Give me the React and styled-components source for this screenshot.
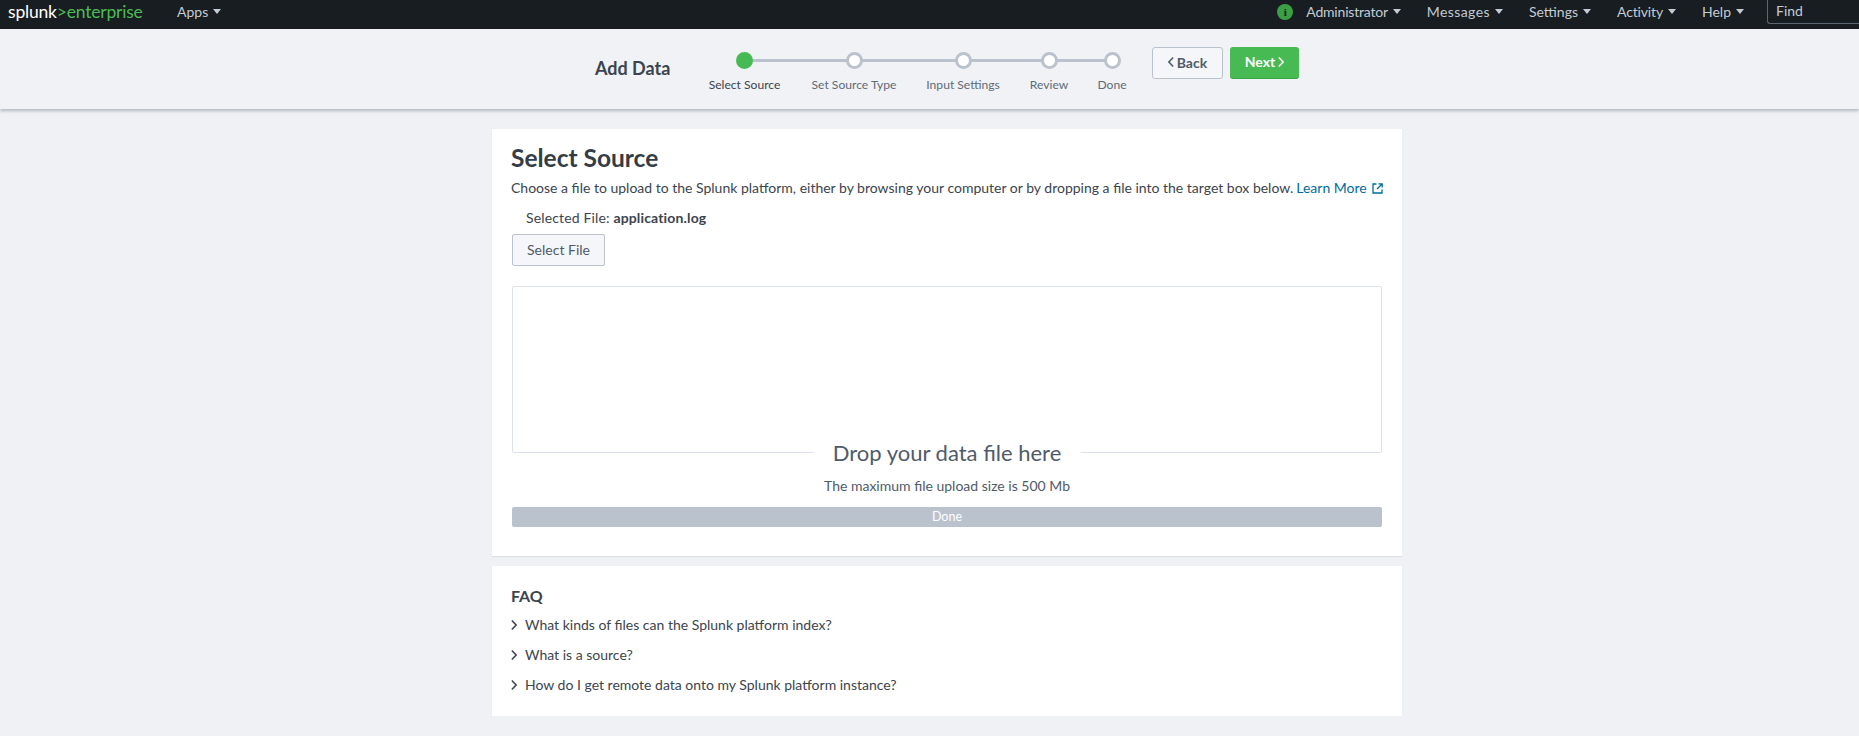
import React from 'react';
import styled, { createGlobalStyle } from 'styled-components';

const Global = createGlobalStyle`
  html, body { margin: 0; padding: 0; }
  body {
    background: #eff1f4;
    font-family: Lato, "Open Sans", sans-serif;
    color: #3c444d;
    font-size: 14px;
  }
`;

const Nav = styled.div`
  height: 29px;
  box-sizing: border-box;
  padding-bottom: 6px;
  background: #171d21;
  display: flex;
  align-items: center;
  overflow: hidden;
`;
const Logo = styled.div`
  margin-left: 8px;
  width: 135px;
  font-size: 17.5px;
  font-weight: 400;
  letter-spacing: -0.2px;
  color: #ffffff;
  white-space: nowrap;
  span { color: #4dbb55; }
`;
const NavItem = styled.div`
  display: flex;
  align-items: center;
  gap: 5px;
  color: #c3cbd4;
  font-size: 14px;
  letter-spacing: ${p => p.$ls || 0}px;
  white-space: nowrap;
`;
const Caret = styled.i`
  width: 0;
  height: 0;
  border-left: 4px solid transparent;
  border-right: 4px solid transparent;
  border-top: 5px solid #c3cbd4;
`;
const AppsMenu = styled.div`
  margin-left: 34px;
`;
const NavRight = styled.div`
  margin-left: auto;
  display: flex;
  align-items: center;
  gap: 26px;
`;
const InfoDot = styled.div`
  width: 16px;
  height: 16px;
  margin-right: -13px;
  border-radius: 50%;
  background: #3c9e45;
  color: #171d21;
  font: bold 11px/16px "Liberation Serif", serif;
  text-align: center;
`;
const FindBox = styled.div`
  align-self: flex-start;
  width: 92px;
  height: 25px;
  margin-left: -3px;
  box-sizing: border-box;
  border-left: 1px solid #5c6773;
  border-bottom: 1px solid #5c6773;
  border-bottom-left-radius: 3px;
  padding-left: 8px;
  color: #c3cbd4;
  font-size: 14px;
  line-height: 23px;
`;

const SubHeader = styled.div`
  height: 80px;
  box-sizing: border-box;
  background: #f0f2f5;
  box-shadow: 0 2px 3px rgba(60, 80, 110, 0.35);
  display: flex;
  padding-left: 595px;
`;
const PageTitle = styled.div`
  width: 113px;
  margin-top: 28px;
  font-size: 18px;
  font-weight: 700;
  line-height: 22px;
  color: #3c444d;
`;
const Steps = styled.div`
  display: flex;
  gap: 30px;
  padding-top: 23px;
`;
const Step = styled.div`
  position: relative;
  width: ${p => p.$w}px;
  display: flex;
  flex-direction: column;
  align-items: center;
  &::after {
    content: '';
    display: ${p => (p.$line ? 'block' : 'none')};
    position: absolute;
    top: 7px;
    left: 50%;
    width: ${p => p.$line}px;
    height: 3px;
    background: #bac2ce;
  }
`;
const Dot = styled.div`
  position: relative;
  z-index: 1;
  width: 17px;
  height: 17px;
  box-sizing: border-box;
  border-radius: 50%;
  border: 3px solid ${p => (p.$active ? '#47ba53' : '#bac2ce')};
  background: ${p => (p.$active ? '#47ba53' : '#ffffff')};
`;
const StepLabel = styled.div`
  margin-top: 8px;
  font-size: 12.1px;
  line-height: 15px;
  white-space: nowrap;
  color: ${p => (p.$active ? '#3c444d' : '#5f6b78')};
`;
const Actions = styled.div`
  display: flex;
  gap: 7px;
  margin-left: 27px;
  padding-top: 18px;
  align-items: flex-start;
`;
const NavButton = styled.button`
  height: 32px;
  box-sizing: border-box;
  border-radius: 3px;
  font-family: inherit;
  font-size: 14px;
  font-weight: 700;
  display: flex;
  align-items: center;
  justify-content: center;
  gap: 3px;
  padding: 0 0 2px;
  width: ${p => p.$w}px;
  color: ${p => (p.$primary ? '#ffffff' : '#4f5b69')};
  background: ${p => (p.$primary ? '#47ba53' : '#f4f6f9')};
  border: ${p => (p.$primary ? 'none' : '1px solid #bac2ce')};
  border-bottom: ${p => (p.$primary ? '1px solid #3da547' : '1px solid #bac2ce')};
`;

const Main = styled.div`
  width: 910px;
  margin: 20px 0 0 492px;
  display: flex;
  flex-direction: column;
  gap: 10px;
`;
const Card = styled.div`
  background: #ffffff;
  box-shadow: 0 1px 1px #dde1e8;
  padding: 0 20px 0 19px;
  height: ${p => p.$h}px;
  box-sizing: border-box;
`;
const Title = styled.h2`
  margin: 0;
  padding-top: 15px;
  font-size: 24.5px;
  line-height: 28px;
  font-weight: 700;
  color: #343c45;
`;
const Intro = styled.div`
  margin-top: 6px;
  display: flex;
  align-items: center;
  white-space: nowrap;
  line-height: 20px;
  font-size: 14px;
`;
const LearnMore = styled.a`
  color: #006d9c;
  margin-left: 3px;
  display: flex;
  align-items: center;
  gap: 5px;
`;
const SelectedFile = styled.div`
  margin: 10px 0 0 15px;
  line-height: 20px;
  letter-spacing: 0.15px;
  b { font-weight: 700; }
`;
const SelectButton = styled.button`
  display: block;
  margin: 6px 0 0 1px;
  width: 93px;
  height: 32px;
  box-sizing: border-box;
  background: #f4f6f9;
  border: 1px solid #bac2ce;
  border-radius: 2px;
  font-family: inherit;
  font-size: 14px;
  color: #4f5b69;
  padding: 0 0 2px;
`;
const DropBox = styled.div`
  margin: 20px 0 0 1px;
  width: 870px;
  height: 167px;
  box-sizing: border-box;
  border: 1px solid #dde1e8;
  border-radius: 2px;
  position: relative;
`;
const DropLabel = styled.div`
  position: absolute;
  left: 50%;
  bottom: -17px;
  transform: translateX(-50%);
  background: #ffffff;
  padding: 0 19px;
  white-space: nowrap;
  font-size: 22px;
  line-height: 32px;
  color: #4f5b69;
`;
const MaxSize = styled.div`
  margin-top: 23px;
  text-align: center;
  padding-left: 1px;
  line-height: 20px;
  color: #4f5b69;
`;
const Bar = styled.div`
  margin: 11px 0 0 1px;
  width: 870px;
  height: 20px;
  border-radius: 2px;
  background: #bac2ce;
  color: #ffffff;
  text-align: center;
  font-size: 12.5px;
  line-height: 19px;
`;
const FaqTitle = styled.h3`
  margin: 0;
  padding-top: 20px;
  font-size: 16px;
  line-height: 20px;
  font-weight: 700;
  color: #3c444d;
`;
const FaqList = styled.div`
  margin-top: 9px;
  display: flex;
  flex-direction: column;
  gap: 10px;
`;
const FaqRow = styled.div`
  display: flex;
  align-items: center;
  gap: 8px;
  line-height: 20px;
`;

const Chevron = ({ left, size = 10, color = 'currentColor', width = 1.5 }) => (
  <svg width={size * 0.6} height={size} viewBox="0 0 6 10" fill="none">
    <path d={left ? 'M5.2 0.5 L0.9 5 L5.2 9.5' : 'M0.8 0.5 L5.1 5 L0.8 9.5'} stroke={color} strokeWidth={width} />
  </svg>
);

const ExternalIcon = () => (
  <svg width="11" height="11" viewBox="0 0 11 11" fill="none" stroke="#006d9c" strokeWidth="1.3">
    <path d="M4.5 1 H1 V10 H10 V6.5" />
    <path d="M6.5 0.8 H10.2 V4.5 M10 1 L5 6" />
  </svg>
);

const menus = [
  { label: 'Administrator', ls: -0.2 },
  { label: 'Messages', ls: 0.4 },
  { label: 'Settings' },
  { label: 'Activity', ls: -0.15 },
  { label: 'Help' },
];

const steps = [
  { label: 'Select Source', w: 73, line: 110, active: true },
  { label: 'Set Source Type', w: 86, line: 109 },
  { label: 'Input Settings', w: 72, line: 87 },
  { label: 'Review', w: 40, line: 63 },
  { label: 'Done', w: 26 },
];

const faqs = [
  'What kinds of files can the Splunk platform index?',
  'What is a source?',
  'How do I get remote data onto my Splunk platform instance?',
];

export default function App() {
  return (
    <>
      <Global />
      <Nav>
        <Logo>splunk<span>&gt;enterprise</span></Logo>
        <AppsMenu>
          <NavItem>Apps <Caret /></NavItem>
        </AppsMenu>
        <NavRight>
          <InfoDot>i</InfoDot>
          {menus.map(m => (
            <NavItem key={m.label} $ls={m.ls}>{m.label} <Caret /></NavItem>
          ))}
          <FindBox>Find</FindBox>
        </NavRight>
      </Nav>
      <SubHeader>
        <PageTitle>Add Data</PageTitle>
        <Steps>
          {steps.map(s => (
            <Step key={s.label} $w={s.w} $line={s.line}>
              <Dot $active={s.active} />
              <StepLabel $active={s.active}>{s.label}</StepLabel>
            </Step>
          ))}
        </Steps>
        <Actions>
          <NavButton $w={71}><Chevron left /> Back</NavButton>
          <NavButton $w={69} $primary>Next <Chevron /></NavButton>
        </Actions>
      </SubHeader>
      <Main>
        <Card $h={427}>
          <Title>Select Source</Title>
          <Intro>
            Choose a file to upload to the Splunk platform, either by browsing your computer or by dropping a file into the target box below.
            <LearnMore>Learn More <ExternalIcon /></LearnMore>
          </Intro>
          <SelectedFile>Selected File: <b>application.log</b></SelectedFile>
          <SelectButton>Select File</SelectButton>
          <DropBox>
            <DropLabel>Drop your data file here</DropLabel>
          </DropBox>
          <MaxSize>The maximum file upload size is 500 Mb</MaxSize>
          <Bar>Done</Bar>
        </Card>
        <Card $h={150}>
          <FaqTitle>FAQ</FaqTitle>
          <FaqList>
            {faqs.map(q => (
              <FaqRow key={q}><Chevron />{q}</FaqRow>
            ))}
          </FaqList>
        </Card>
      </Main>
    </>
  );
}
